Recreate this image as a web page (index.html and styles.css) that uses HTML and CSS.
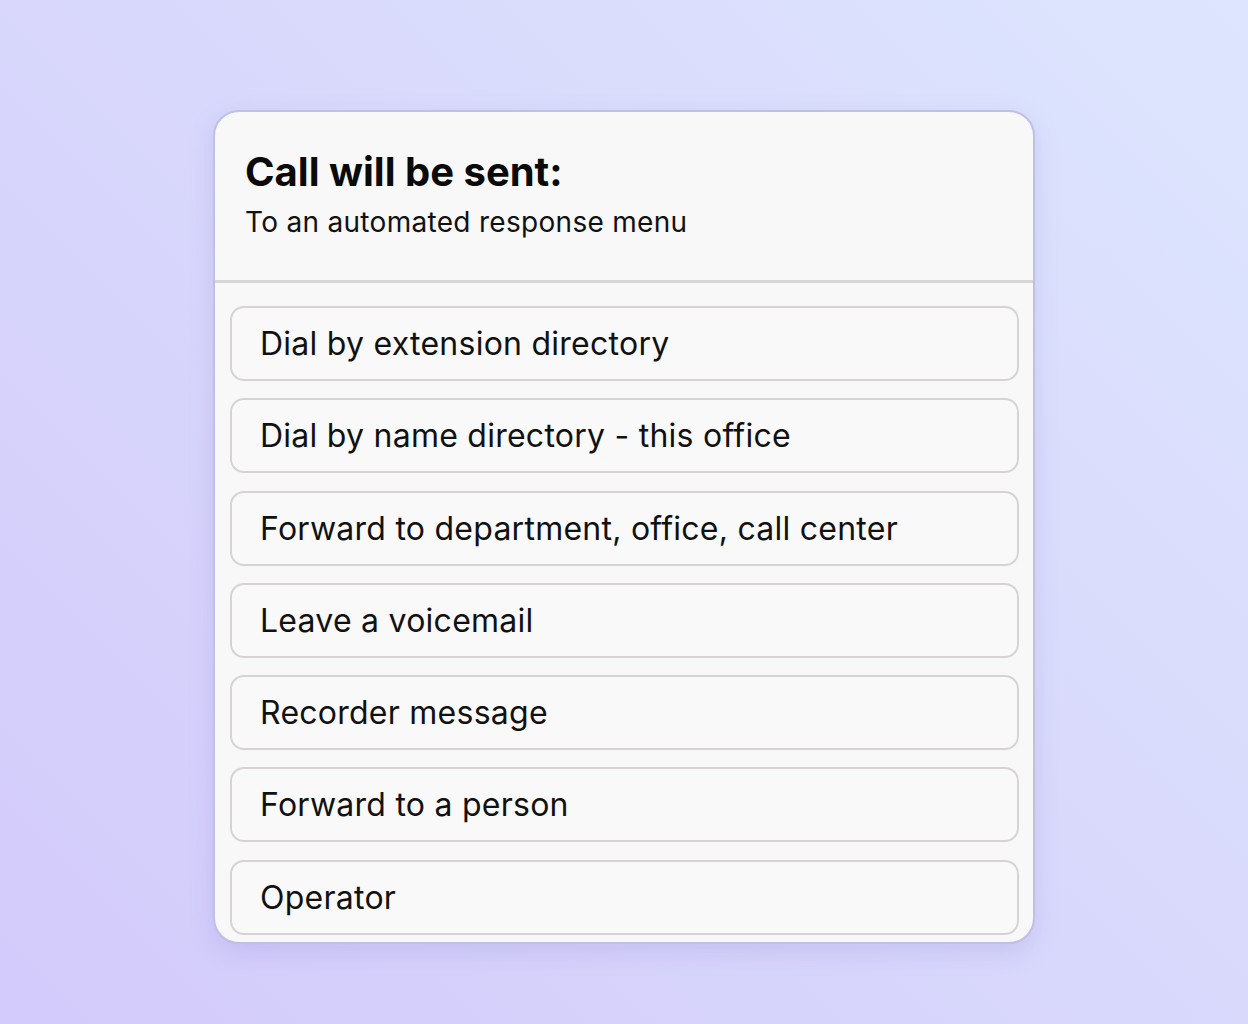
FILE: index.html
```html
<!DOCTYPE html>
<html lang="en">
<head>
  <meta charset="UTF-8">
  <meta name="viewport" content="width=device-width, initial-scale=1.0">
  <title>Call routing</title>
  <link rel="stylesheet" href="styles.css">
</head>
<body>
  <div class="page">
    <div class="route-card">
      <div class="route-header">
        <h2>Call will be sent:</h2>
        <p>To an automated response menu</p>
      </div>
      <ul class="route-list">
        <li class="route-item">Dial by extension directory</li>
        <li class="route-item">Dial by name directory - this office</li>
        <li class="route-item">Forward to department, office, call center</li>
        <li class="route-item">Leave a voicemail</li>
        <li class="route-item">Recorder message</li>
        <li class="route-item">Forward to a person</li>
        <li class="route-item">Operator</li>
      </ul>
    </div>
  </div>
</body>
</html>
```

FILE: styles.css
```css
html, body {
  margin: 0;
  padding: 0;
}

body {
  font-family: Inter, "Noto Sans", sans-serif;
  color: #111;
  background: linear-gradient(225deg, #dde6fe 0%, #d9d9fc 45%, #d3cbfb 100%);
  min-height: 1024px;
}

.page {
  display: flex;
  justify-content: center;
  padding-top: 110px;
}

.route-card {
  width: 818px;
  background-color: #f8f8f8;
  border: 2px solid #bfc0e8;
  border-radius: 26px;
  box-shadow: 0px 8px 24px hsla(245, 40%, 60%, 0.18);
  overflow: hidden;
}

.route-header {
  padding: 36px 30px 41px 30px;
  border-bottom: 3px solid #d6d6d8;
}

.route-header h2 {
  margin: 0;
  font-size: 40px;
  font-weight: 700;
  line-height: 48px;
  color: #0a0a0a;
}

.route-header p {
  margin: 9px 0 0 0;
  font-size: 28px;
  line-height: 34px;
  letter-spacing: 0.3px;
  color: #111;
}

.route-list {
  list-style: none;
  margin: 0;
  padding: 23px 14px 7px 15px;
  display: flex;
  flex-direction: column;
  gap: 17.3px;
}

.route-item {
  box-sizing: border-box;
  height: 75px;
  display: flex;
  align-items: center;
  padding: 0 28px;
  border: 2px solid #d7d3d3;
  border-radius: 14px;
  background-color: #f9f9f9;
  font-size: 32px;
  letter-spacing: 0.25px;
  color: #111;
}
```
